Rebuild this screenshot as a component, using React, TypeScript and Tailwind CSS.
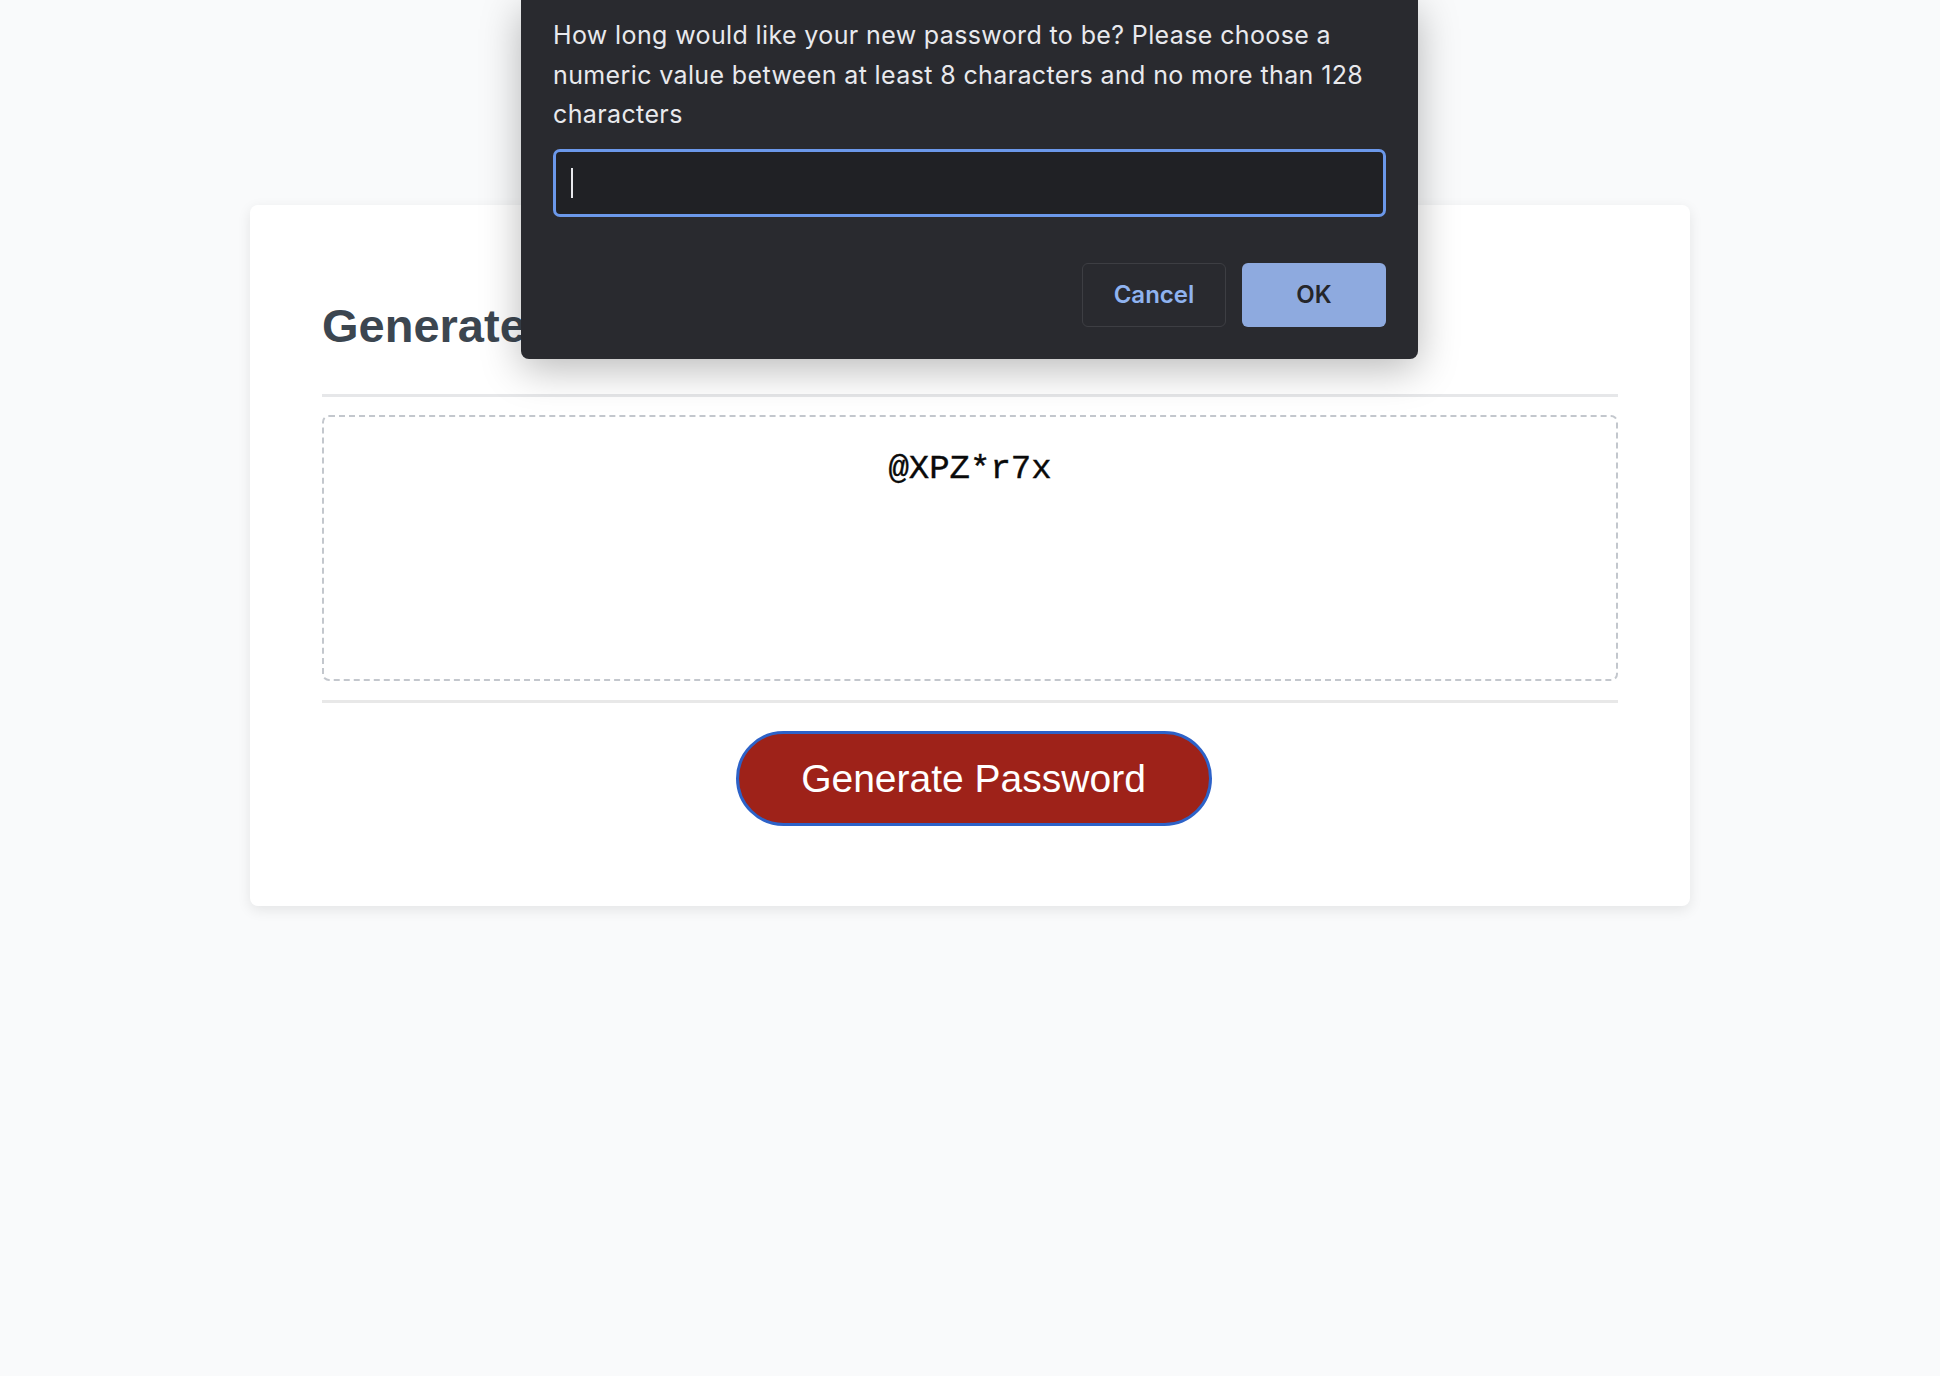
import React from "react";

export default function App() {
  return (
    <div className="relative min-h-[1376px] w-full bg-[#f9fafb]" style={{ fontFamily: '"Liberation Sans", Arial, sans-serif' }}>
      <div className="pt-[205px] flex justify-center">
        <div className="w-[1440px] rounded-[8px] bg-white px-[72px] pt-[97px] pb-[80px] shadow-[0_4px_14px_rgba(0,0,0,0.09)]">
          <h2 className="text-[47px] font-bold leading-none text-[#3c4650]" style={{ fontFamily: '"Liberation Sans", Arial, sans-serif' }}>
            Generate a Password
          </h2>
          <div className="mt-[45px] h-[3px] bg-[#e6e7e9]" />
          <div className="mt-[18px] h-[266px] rounded-[7px] border-2 border-dashed border-[#c3c7cd] pt-[33px] text-center">
            <span className="text-[34px] leading-[38px] text-[#0a0a0a] [-webkit-text-stroke:0.4px_#0a0a0a]" style={{ fontFamily: '"Liberation Mono", "Courier New", monospace' }}>
              @XPZ*r7x
            </span>
          </div>
          <div className="mt-[19px] h-[3px] bg-[#e8e8e8]" />
          <div className="mt-[28px] flex justify-center pl-[7px]">
            <button className="h-[95px] w-[476px] rounded-full border-[3px] border-[#2d62c8] bg-[#9e2219] text-[39px] leading-none text-white">
              Generate Password
            </button>
          </div>
        </div>
      </div>

      <div className="absolute left-[521px] top-0 w-[897px] rounded-b-[8px] bg-[#292a2f] px-[32px] pb-[32px] pt-[16px] shadow-[0_10px_40px_rgba(0,0,0,0.28)]" style={{ fontFamily: 'Inter, "Noto Sans", sans-serif' }}>
        <p className="text-[25px] leading-[39.5px] tracking-[0.015em] text-[#e8e9ed]">
          How long would like your new password to be? Please choose a numeric value between at least 8 characters and no more than 128 characters
        </p>
        <div className="mt-[14px] flex h-[68px] items-center rounded-[7px] border-[3px] border-[#6b98ea] bg-[#202125] pl-[15px]">
          <div className="h-[30px] w-[2px] bg-[#e8e9ed]" />
        </div>
        <div className="mt-[46px] flex justify-end gap-[16px]">
          <button className="h-[64px] w-[144px] rounded-[6px] border border-[#3d3e43] text-[24px] font-semibold text-[#8fb3f0]">
            Cancel
          </button>
          <button className="h-[64px] w-[144px] rounded-[6px] bg-[#8eaadf] text-[24px] font-semibold text-[#25262a]">
            OK
          </button>
        </div>
      </div>
    </div>
  );
}
